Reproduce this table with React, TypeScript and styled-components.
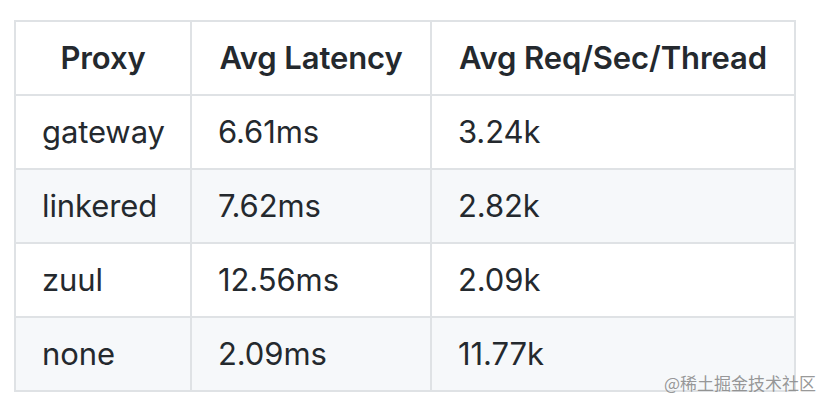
import { createGlobalStyle, styled } from 'styled-components';

const Global = createGlobalStyle`
    html, body {
        margin: 0;
        background: #fff;
    }
    body {
        font-family: Inter, "Noto Sans", "Liberation Sans", sans-serif;
        color: #24292e;
    }
`;

const S = {
    Page: styled.div`
        position: relative;
        width: 830px;
        height: 406px;
        padding: 20px 0 0 14px;
        box-sizing: border-box;
    `,
    Table: styled.table`
        border-collapse: collapse;
        border-spacing: 0;
        table-layout: fixed;
        width: 780px;
        font-size: 31px;
        line-height: 48px;
        letter-spacing: -0.1px;
    `,
    Row: styled.tr<{ $striped?: boolean }>`
        background: ${(p) => (p.$striped ? '#f6f8fa' : '#fff')};
    `,
    Head: styled.th`
        border: 2px solid #dfe2e5;
        padding: 12px 26px;
        font-weight: 600;
        text-align: center;
        white-space: nowrap;
    `,
    Cell: styled.td`
        border: 2px solid #dfe2e5;
        padding: 12px 26px;
        font-weight: 400;
        white-space: nowrap;
    `,
    Watermark: styled.span`
        position: absolute;
        right: 14px;
        bottom: 12px;
        font-family: "Noto Sans CJK SC", sans-serif;
        font-size: 17px;
        line-height: 22px;
        color: rgba(125, 125, 125, 0.8);
    `,
};

const rows = [
    ['gateway', '6.61ms', '3.24k'],
    ['linkered', '7.62ms', '2.82k'],
    ['zuul', '12.56ms', '2.09k'],
    ['none', '2.09ms', '11.77k'],
];

export default function App() {
    return (
        <S.Page>
            <Global />
            <S.Table>
                <colgroup>
                    <col style={{ width: 176 }} />
                    <col style={{ width: 240 }} />
                    <col style={{ width: 364 }} />
                </colgroup>
                <thead>
                    <S.Row>
                        <S.Head>Proxy</S.Head>
                        <S.Head>Avg Latency</S.Head>
                        <S.Head>Avg Req/Sec/Thread</S.Head>
                    </S.Row>
                </thead>
                <tbody>
                    {rows.map((r, i) => (
                        <S.Row key={r[0]} $striped={i % 2 === 1}>
                            {r.map((c) => (
                                <S.Cell key={c}>{c}</S.Cell>
                            ))}
                        </S.Row>
                    ))}
                </tbody>
            </S.Table>
            <S.Watermark>@稀土掘金技术社区</S.Watermark>
        </S.Page>
    );
}
